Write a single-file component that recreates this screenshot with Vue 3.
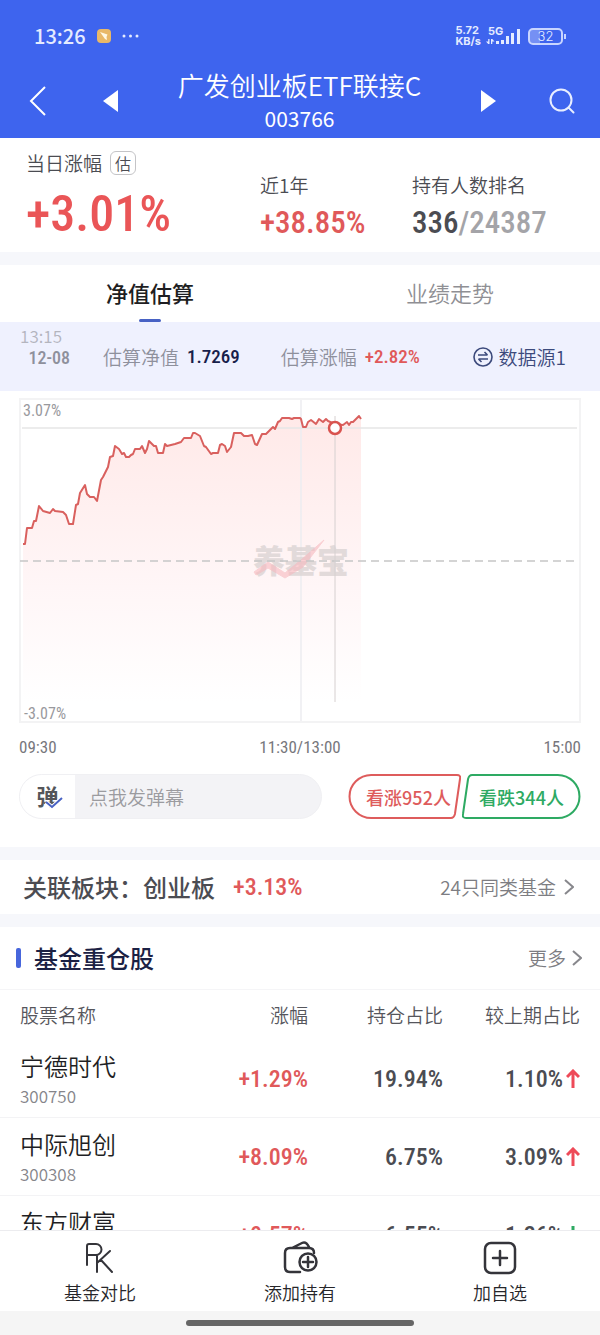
<template>
  <div class="app">
    <header class="top">
      <!-- 状态栏 -->
      <div class="status">
        <span class="clock">13:26</span>
        <svg class="badge" width="14" height="14" viewBox="0 0 14 14">
          <rect width="14" height="14" rx="4" fill="#e9b868" />
          <path d="M3 3 10.500 5.500 9.500 8 10 11 8 10Z" fill="#fff8e4" />
        </svg>
        <svg width="18" height="6" viewBox="0 0 18 6" fill="#e4ebff">
          <circle cx="3" cy="3" r="1.5" /><circle cx="9.5" cy="3" r="1.5" /><circle cx="16" cy="3" r="1.5" />
        </svg>
        <div class="speed"><span>5.72</span><span>KB/s</span></div>
        <div class="signal">
          <span class="net">5G</span>
          <svg width="35" height="17" viewBox="0 0 35 17" fill="#e4ebff">
            <path d="M3.500 11v5H2.200L0 13.500H2.200V11ZM5 16v-5h1.300L8.500 13.500H6.300V16Z" />
            <rect x="10" y="13" width="3" height="3" /><rect x="15" y="12" width="3" height="4" />
            <rect x="20" y="8" width="3" height="8" /><rect x="25" y="5" width="3" height="11" />
            <rect x="31" y="1" width="3" height="15" />
          </svg>
        </div>
        <div class="battery"><span>32</span></div>
      </div>
      <!-- 导航栏 -->
      <nav class="nav">
        <button class="icon-btn back" aria-label="返回">
          <svg width="20" height="30" viewBox="0 0 20 30"><path d="M17 1 3 15 17 29" fill="none" stroke="#fff" stroke-width="2" /></svg>
        </button>
        <button class="icon-btn prev" aria-label="上一只">
          <svg width="16" height="22" viewBox="0 0 16 22"><path d="M15 0v22L0 11Z" fill="#fff" /></svg>
        </button>
        <div class="title">
          <h1>{{ fund.name }}</h1>
          <p>{{ fund.code }}</p>
        </div>
        <button class="icon-btn next" aria-label="下一只">
          <svg width="16" height="22" viewBox="0 0 16 22"><path d="M1 0v22L16 11Z" fill="#fff" /></svg>
        </button>
        <button class="icon-btn" aria-label="搜索">
          <svg width="26" height="26" viewBox="0 0 26 26" fill="none" stroke="#e8eeff" stroke-width="2">
            <circle cx="12" cy="12" r="10.500" /><path d="m19.500 19.500 5 5" stroke-linecap="round" />
          </svg>
        </button>
      </nav>
    </header>

    <main class="content">
      <section class="card stats">
        <div class="stat">
          <div class="label">当日涨幅<span class="tag">估</span></div>
          <div class="num big red">+3.01%</div>
        </div>
        <div class="stat">
          <div class="label">近1年</div>
          <div class="num mid red">+38.85%</div>
        </div>
        <div class="stat">
          <div class="label">持有人数排名</div>
          <div class="num mid">336<span class="total">/24387</span></div>
        </div>
      </section>

      <section class="card">
        <div class="tabs">
          <button
            v-for="tab in tabs"
            :key="tab"
            class="tab"
            :class="{ active: tab === activeTab }"
            @click="activeTab = tab"
          >{{ tab }}</button>
        </div>

        <div class="info">
          <div class="when"><span class="time">13:15</span><span class="num date">12-08</span></div>
          <div class="pair"><span>估算净值</span><span class="num value">1.7269</span></div>
          <div class="pair"><span>估算涨幅</span><span class="num red">+2.82%</span></div>
          <button class="source">
            <svg width="20" height="20" viewBox="0 0 20 20" fill="none" stroke="#3c4a7c" stroke-width="1.6">
              <circle cx="10" cy="10" r="9" />
              <path d="M5 8h9.500M11.500 5l3 3M15 12H5.500M8.500 15l-3-3" />
            </svg>
            数据源1
          </button>
        </div>

        <!-- 分时图 -->
        <div class="chart">
          <svg viewBox="0 0 562 325">
            <defs>
              <linearGradient id="area" x1="0" y1="0" x2="0" y2="1">
                <stop offset="0" stop-color="#ffe9e8" />
                <stop offset="0.6" stop-color="#fff6f7" />
                <stop offset="1" stop-color="#fff" />
              </linearGradient>
            </defs>
            <path :d="areaPath" fill="url(#area)" />
            <rect x="1" y="1" width="560" height="323" fill="none" stroke="#f3f3f4" stroke-width="2" />
            <path d="M282 2V323" stroke="#ececf0" stroke-width="1.500" />
            <path d="M3 30H558" stroke="#e6e6e6" stroke-width="1.500" />
            <g class="watermark">
              <text x="234" y="175">养基宝</text>
              <path d="M235 174 249 164 266 175 282 162 305 142 284 169 266 180 249 170 237 177Z" />
            </g>
            <path d="M1 163H559" stroke="#c6c6c6" stroke-width="1.500" stroke-dasharray="8 5" />
            <path d="M316 18V304" stroke="#d6d0d0" />
            <polyline :points="linePoints" class="line" />
            <circle cx="316" cy="30" r="6" fill="#fff" stroke="#d9534f" stroke-width="2.500" />
            <text x="4" y="18" class="scale">3.07%</text>
            <text x="5" y="321" class="scale">-3.07%</text>
          </svg>
          <div class="axis num"><span>09:30</span><span>11:30/13:00</span><span>15:00</span></div>
        </div>

        <div class="actions">
          <div class="danmu">
            <button class="toggle" aria-label="弹幕开关">
              弹
              <svg width="18" height="13" viewBox="0 0 18 13">
                <path d="m1 5 6 5L17 1" stroke="#fff" stroke-width="4" />
                <path d="m1 5 6 5L17 1" stroke="#4862c4" stroke-width="2" />
              </svg>
            </button>
            <input type="text" placeholder="点我发弹幕" aria-label="点我发弹幕" />
          </div>
          <div class="votes">
            <button class="vote up">
              <svg viewBox="0 0 112 45" preserveAspectRatio="none"><path d="M23 1H108Q112 1 111 5L106 40Q105 44 102 44H23A21.500 21.500 0 0 1 23 1Z" /></svg>
              <span>看涨952人</span>
            </button>
            <button class="vote down">
              <svg viewBox="0 0 118 45" preserveAspectRatio="none"><path d="M95 1H10Q7 1 6 5L1 40Q0 44 4 44H95A21.500 21.500 0 0 0 95 1Z" /></svg>
              <span>看跌344人</span>
            </button>
          </div>
        </div>
      </section>

      <section class="card related">
        <h2>关联板块：创业板</h2>
        <span class="num red">+3.13%</span>
        <a href="#" class="more">24只同类基金<svg width="10" height="16" viewBox="0 0 10 16"><path d="m1 1 8 7-8 7" /></svg></a>
      </section>

      <section class="card">
        <div class="holdings-head">
          <h2>基金重仓股</h2>
          <a href="#" class="more">更多<svg width="10" height="16" viewBox="0 0 10 16"><path d="m1 1 8 7-8 7" /></svg></a>
        </div>
        <table class="holdings">
          <thead>
            <tr><th class="col-name">股票名称</th><th class="col-rise">涨幅</th><th class="col-share">持仓占比</th><th>较上期占比</th></tr>
          </thead>
          <tbody>
            <tr v-for="item in stocks" :key="item.name">
              <td>
                <div class="name">{{ item.name }}</div>
                <div class="code">{{ item.code }}</div>
              </td>
              <td class="num red">{{ item.rise }}</td>
              <td class="num">{{ item.share }}</td>
              <td class="num">
                <span class="change">
                  {{ item.change }}
                  <svg width="14" height="20" viewBox="0 0 14 20" :class="item.trend"><path d="M7 19V2M1 8l6-6 6 6" /></svg>
                </span>
              </td>
            </tr>
          </tbody>
        </table>
      </section>
    </main>

    <footer class="bottom">
      <button>
        <svg class="thin" width="34" height="34" viewBox="0 0 34 34">
          <path d="M4 24V5Q4 3 6 3H13A5.500 5.500 0 0 1 13 14H4M14 15V31M27 10 14 22M18 19 29 31" />
        </svg>
        基金对比
      </button>
      <button>
        <svg width="36" height="34" viewBox="0 0 36 34">
          <path d="M18 31H8Q3 31 3 26V12Q3 7 8 7H27Q32 7 32 12M10 7 20 2Q24 0 27 6" />
          <circle cx="26" cy="21" r="8.500" /><path d="M26 16V26M21 21H31" />
        </svg>
        添加持有
      </button>
      <button>
        <svg width="34" height="34" viewBox="0 0 34 34">
          <rect x="2" y="2" width="30" height="30" rx="6" /><path d="M17 10V24M10 17H24" />
        </svg>
        加自选
      </button>
    </footer>
    <div class="gesture"><i></i></div>
  </div>
</template>

<script setup>
import { ref } from 'vue'

const fund = { name: '广发创业板ETF联接C', code: '003766' }

const tabs = ['净值估算', '业绩走势']
const activeTab = ref('净值估算')

// 重仓股列表
const stocks = [
  { name: '宁德时代', code: '300750', rise: '+1.29%', share: '19.94%', change: '1.10%', trend: 'up' },
  { name: '中际旭创', code: '300308', rise: '+8.09%', share: '6.75%', change: '3.09%', trend: 'up' },
  { name: '东方财富', code: '300059', rise: '+0.57%', share: '6.55%', change: '1.26%', trend: 'down' },
]

// 分时走势坐标
const points = [
  [4, 146], [6, 146], [8, 130], [13, 130], [15, 123], [17, 123], [20, 108], [24, 113], [31, 115], [34, 111],
  [36, 113], [44, 114], [47, 117], [50, 126], [54, 126], [57, 107], [59, 106], [61, 95], [66, 87], [68, 96],
  [71, 99], [75, 99], [78, 103], [82, 82], [84, 79], [89, 69], [91, 59], [94, 58], [96, 48], [100, 51],
  [103, 56], [105, 55], [107, 59], [110, 59], [112, 57], [114, 56], [116, 51], [121, 51], [123, 48], [126, 55],
  [128, 51], [130, 43], [135, 48], [137, 48], [139, 55], [144, 55], [146, 46], [148, 48], [156, 46], [162, 44],
  [165, 40], [172, 40], [174, 35], [176, 35], [181, 38], [185, 48], [187, 49], [192, 56], [194, 55], [199, 55],
  [201, 47], [203, 46], [206, 48], [208, 54], [212, 49], [215, 35], [222, 35], [225, 38], [229, 38], [233, 37],
  [236, 46], [238, 47], [243, 36], [247, 36], [250, 33], [254, 29], [256, 31], [259, 24], [261, 23], [263, 20],
  [270, 20], [273, 21], [275, 20], [281, 20], [282, 21], [284, 29], [287, 29], [289, 24], [292, 22], [297, 26],
  [300, 21], [304, 24], [307, 21], [309, 23], [316, 26], [324, 27], [328, 24], [330, 27], [332, 24], [334, 24],
  [337, 21], [340, 18], [342, 21],
]
const linePoints = points.map((p) => p.join(',')).join(' ')
const areaPath = `M4 304L${linePoints}V304Z`
</script>

<style>
body { margin: 0; background: #f5f6fa; }
</style>

<style scoped>
.app { height: 100vh; display: flex; flex-direction: column; background: #f6f7fb; color: #4b4c52; font-family: "Noto Sans CJK SC", sans-serif; font-size: 19px; font-weight: 350; line-height: 28px; }
button { padding: 0; border: 0; background: none; color: inherit; font: inherit; cursor: pointer; }
h1, h2, p { margin: 0; font-weight: 350; }
a { color: inherit; text-decoration: none; }
svg { display: block; flex: none; }
.num { font-family: "Roboto Condensed", Roboto, "Noto Sans CJK SC", sans-serif; font-weight: 500; }
.red { color: #e0595a; }

/* 顶部 */
.top { flex: none; background: #3e64ee; color: #fff; }
.status { display: flex; align-items: center; height: 72px; padding: 0 37px 0 34px; color: #e4ebff; }
.clock { font-size: 20px; font-weight: 500; }
.badge { margin: 0 10px 0 11px; }
.speed { display: flex; flex-direction: column; margin-left: auto; font-family: Inter, sans-serif; font-size: 11px; font-weight: 700; line-height: 11px; }
.signal { position: relative; margin: 0 7px 0 5px; }
.net { position: absolute; left: 2px; top: -2px; font-family: Inter, sans-serif; font-size: 11px; font-weight: 700; line-height: 11px; }
.battery { position: relative; display: flex; justify-content: center; align-items: center; width: 31px; height: 13px; border: 2px solid #c8d5ff; border-radius: 5px; background: linear-gradient(90deg, #7590f4 32%, transparent 32%); font-family: Inter, sans-serif; font-size: 13px; line-height: 13px; }
.battery::after { content: ''; position: absolute; right: -5px; top: 4px; width: 2px; height: 5px; background: #c8d5ff; }
.nav { display: flex; align-items: center; height: 58px; padding: 0 24px 8px 28px; }
.icon-btn { display: flex; justify-content: center; align-items: center; width: 28px; height: 44px; }
.back { width: 20px; }
.prev { margin-left: 49px; }
.next { margin-right: 46px; }
.title { flex: 1; text-align: center; }
.title h1 { font-size: 26px; line-height: 34px; }
.title p { font-size: 21px; font-weight: 400; line-height: 32px; }

/* 内容 */
.content { flex: 1; min-height: 0; overflow-y: auto; scrollbar-width: none; }
.card { margin-bottom: 13px; background: #fff; }
.stats { display: grid; grid-template-columns: 234px 152px 1fr; align-items: end; padding: 11px 26px 5px; }
.label { display: flex; align-items: center; gap: 8px; }
.tag { border: 1px solid #c4c4c7; border-radius: 6px; padding: 1px 4px; font-size: 16px; line-height: 20px; }
.big { margin-top: 4px; font-size: 50px; line-height: 66px; color: #ea5557; }
.mid { font-size: 31px; line-height: 48px; }
.total { color: #a4a4a8; }

.tabs { display: flex; }
.tab { position: relative; flex: 1; height: 57px; padding-bottom: 4px; font-size: 22px; color: #8f8f94; }
.tab.active { color: #1e1e22; font-weight: 500; }
.tab.active::after { content: ''; position: absolute; left: 50%; bottom: 0; width: 22px; height: 3px; margin-left: -11px; border-radius: 2px; background: #4862c4; }
.info { display: flex; align-items: center; height: 69px; padding: 0 34px 0 20px; background: #eff1fe; color: #8e909c; }
.when { display: flex; flex-direction: column; align-items: flex-end; width: 50px; margin-top: -20px; line-height: 22px; }
.time { margin-right: 8px; font-size: 17px; color: #b4b5be; }
.date { font-size: 18px; }
.pair { display: flex; gap: 8px; margin-left: 33px; }
.pair + .pair { margin-left: 41px; }
.value { color: #17204a; }
.source { display: flex; align-items: center; gap: 6px; margin-left: auto; color: #3c4a7c; }

.chart { padding: 7px 19px 0; }
.chart svg { width: 100%; height: auto; }
.line { fill: none; stroke: #d9605e; stroke-width: 2; stroke-linejoin: round; }
.scale { font-family: "Roboto Condensed", Roboto, sans-serif; font-size: 16px; font-weight: 400; fill: #99999d; }
.watermark text { font-size: 32px; font-weight: 900; fill: #dcd4d4; opacity: 0.8; }
.watermark path { fill: #f7b9bf; stroke: #f7b9bf; opacity: 0.6; }
.axis { display: flex; justify-content: space-between; margin-top: 10px; font-size: 17px; font-weight: 400; color: #77777c; }

.actions { display: flex; justify-content: space-between; gap: 26px; padding: 13px 19px 28px; }
.danmu { flex: 1; display: flex; height: 45px; box-sizing: border-box; border: 1px solid #f0f0f3; border-radius: 23px; overflow: hidden; background: #f3f3f6; }
.toggle { position: relative; width: 55px; padding-bottom: 4px; background: #fff; font-size: 22px; font-weight: 700; color: #55565a; }
.toggle svg { position: absolute; left: 25px; top: 22px; fill: none; }
.danmu input { flex: 1; min-width: 0; padding: 0 14px; border: 0; outline: none; background: none; font: inherit; color: #4b4c52; }
.danmu input::placeholder { color: #9b9b9f; opacity: 1; }
.votes { display: flex; gap: 1px; }
.vote { position: relative; width: 113px; height: 45px; font-size: 18px; font-weight: 500; }
.vote svg { position: absolute; inset: 0; width: 100%; height: 100%; fill: none; stroke: currentColor; stroke-width: 2; }
.up { color: #de5c5c; }
.down { color: #2eaa63; }
.vote.down { width: 119px; }
.vote.up { padding-left: 8px; }

.related { display: flex; align-items: center; height: 54px; padding: 0 26px 0 23px; }
.related h2 { font-size: 24px; font-weight: 500; }
.related .num { margin-left: 18px; font-size: 24px; }
.more { display: flex; align-items: center; gap: 8px; margin-left: auto; color: #7d7d82; }
.more svg { fill: none; stroke: #87878c; stroke-width: 2; }
.holdings-head { display: flex; align-items: center; height: 62px; padding: 0 18px 0 16px; border-bottom: 1px solid #f5f5f7; }
.holdings-head h2 { display: flex; align-items: center; gap: 13px; font-size: 24px; font-weight: 500; color: #1b2144; }
.holdings-head h2::before { content: ''; width: 5px; height: 20px; border-radius: 2px; background: #4766dc; }
.holdings-head .more { gap: 6px; }

.holdings { width: 100%; table-layout: fixed; border-collapse: collapse; }
.holdings th { height: 50px; padding: 0; font-weight: 350; text-align: right; color: #56565c; }
.holdings td { height: 77px; padding: 0; border-bottom: 1px solid #f3f3f5; text-align: right; font-size: 24px; }
.holdings th:first-child, .holdings td:first-child { padding-left: 20px; text-align: left; }
.holdings th:last-child, .holdings td:last-child { padding-right: 20px; }
.col-name { width: 27%; }
.col-rise { width: 21%; }
.col-share { width: 22.5%; }
.name { color: #1f1f24; line-height: 34px; }
.code { font-size: 17px; line-height: 26px; color: #85858a; }
.change { display: inline-flex; align-items: center; gap: 3px; }
.change svg { fill: none; stroke: #ee4a58; stroke-width: 3; }
.change svg.down { stroke: #2eaa63; transform: rotate(180deg); }

/* 底部 */
.bottom { flex: none; display: flex; height: 80px; border-top: 1px solid #ececef; background: #fff; }
.bottom button { flex: 1; display: flex; flex-direction: column; align-items: center; gap: 4px; padding-top: 10px; font-size: 18px; line-height: 26px; color: #26262a; }
.bottom svg { fill: none; stroke: #34343a; stroke-width: 2.5; stroke-linecap: round; stroke-linejoin: round; }
.bottom svg.thin { stroke-width: 2; }
.gesture { flex: none; display: flex; justify-content: center; align-items: center; height: 24px; background: #f5f5f5; }
.gesture i { width: 38%; height: 6px; border-radius: 3px; background: #666; }
</style>
